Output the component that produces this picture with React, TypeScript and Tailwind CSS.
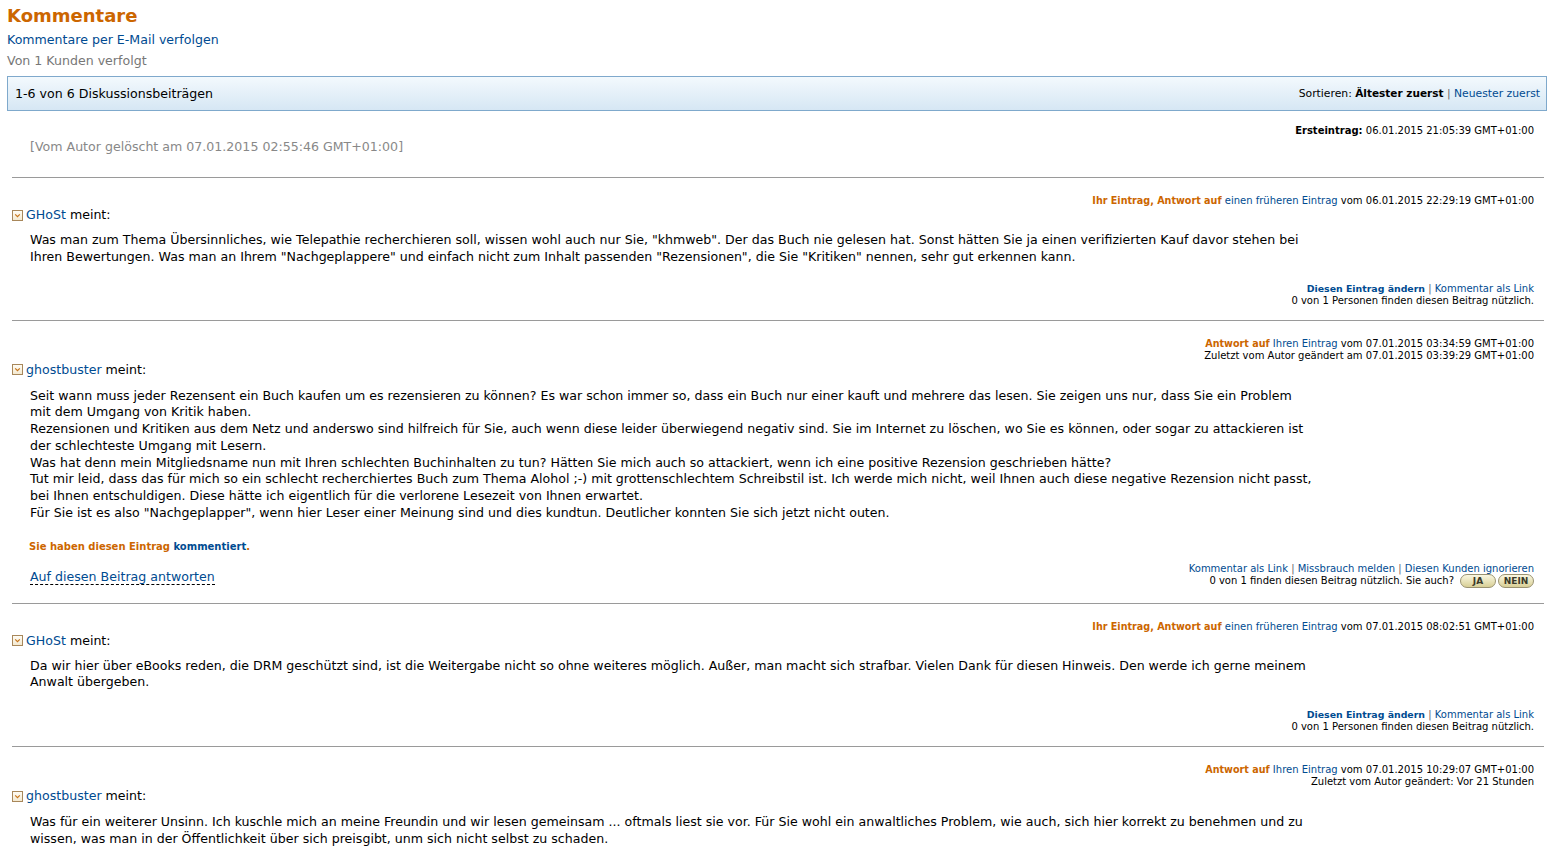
import React from "react";

const ORANGE = "text-[#CC6600]";
const LINK = "text-[#004B91]";

function ToggleIcon() {
  return (
    <svg width="11" height="11" viewBox="0 0 11 11" className="shrink-0">
      <defs>
        <linearGradient id="tg" x1="0" y1="0" x2="0" y2="1">
          <stop offset="0" stopColor="#fffdf6" />
          <stop offset="1" stopColor="#f3e8cf" />
        </linearGradient>
      </defs>
      <rect x="0.5" y="0.5" width="10" height="10" fill="url(#tg)" stroke="#a8875a" />
      <path d="M3.2 4.3 L5.5 6.6 L7.8 4.3" fill="none" stroke="#c8741a" strokeWidth="1.2" />
    </svg>
  );
}

function Pill({ label, w }: { label: string; w: string }) {
  return (
    <span
      className={`inline-flex ${w} h-[14px] items-center justify-center rounded-full border border-[#9a9270] bg-gradient-to-b from-[#fbf8e2] to-[#d8cf95] text-[9px] font-bold leading-none text-[#3a3a2a]`}
    >
      {label}
    </span>
  );
}

function Hr() {
  return <div className="h-px bg-[#9a9a9a]" />;
}

function Name({ name }: { name: string }) {
  return (
    <div className="flex h-[16px] items-center gap-[3px] text-[12.6px] leading-[16px]">
      <ToggleIcon />
      <span>
        <span className={LINK}>{name}</span> meint:
      </span>
    </div>
  );
}

function Body({ lines }: { lines: string[] }) {
  return (
    <div className="pl-[18px] text-[12.6px] leading-[16.75px] text-black">
      {lines.map((l, i) => (
        <div key={i} className="whitespace-nowrap">
          {l}
        </div>
      ))}
    </div>
  );
}

function Meta({ children }: { children: React.ReactNode }) {
  return <div className="pr-[10px] text-right text-[10px] leading-[12px] text-black">{children}</div>;
}

function OwnActions() {
  return (
    <div className="pr-[10px] text-right text-[10px] leading-[12px] text-black">
      <div>
        <span className={`text-[9.4px] font-bold ${LINK}`}>Diesen Eintrag ändern</span>
        <span className="text-[#666]"> | </span>
        <span className={LINK}>Kommentar als Link</span>
      </div>
      <div>0 von 1 Personen finden diesen Beitrag nützlich.</div>
    </div>
  );
}

export default function App() {
  return (
    <div
      className="min-h-[865px] bg-white px-[7px] text-black"
      style={{ fontFamily: '"DejaVu Sans", Verdana, sans-serif' }}
    >
      <div className={`pt-[4px] text-[18px] font-bold leading-[24px] ${ORANGE}`}>Kommentare</div>
      <div className={`mt-[3px] text-[12.6px] leading-[18px] ${LINK}`}>Kommentare per E-Mail verfolgen</div>
      <div className="mt-[3px] text-[12.6px] leading-[18px] text-[#777]">Von 1 Kunden verfolgt</div>

      <div className="mt-[6px] -mr-[7px] flex h-[35px] items-center justify-between border border-[#7fa9cc] bg-gradient-to-b from-[#f3f9fd] to-[#d6e7f4] pl-[7px] pr-[6px] pt-[2px]">
        <span className="text-[12.6px]">1-6 von 6 Diskussionsbeiträgen</span>
        <span className="text-[10.8px]">
          Sortieren: <span className="text-[10.5px] font-bold">Ältester zuerst</span>
          <span className="text-[#666]"> | </span>
          <span className={LINK}>Neuester zuerst</span>
        </span>
      </div>

      <div className="ml-[5px] mr-[-4px]">
        {/* entry 1 */}
        <div className="pt-[14px]">
          <Meta>
            <span className="font-bold">Ersteintrag:</span> 06.01.2015 21:05:39 GMT+01:00
          </Meta>
          <div className="mt-[1px] pl-[18px] text-[12.6px] leading-[17px] text-[#888]">
            [Vom Autor gelöscht am 07.01.2015 02:55:46 GMT+01:00]
          </div>
          <div className="h-[22px]" />
        </div>
        <Hr />

        {/* entry 2 */}
        <div className="pt-[17px]">
          <Meta>
            <span className={`text-[9.6px] font-bold ${ORANGE}`}>Ihr Eintrag, Antwort auf</span>{" "}
            <span className={LINK}>einen früheren Eintrag</span> vom 06.01.2015 22:29:19 GMT+01:00
          </Meta>
          <Name name="GHoSt" />
          <div className="mt-[9px]">
            <Body
              lines={[
                'Was man zum Thema Übersinnliches, wie Telepathie recherchieren soll, wissen wohl auch nur Sie, "khmweb". Der das Buch nie gelesen hat. Sonst hätten Sie ja einen verifizierten Kauf davor stehen bei',
                'Ihren Bewertungen. Was man an Ihrem "Nachgeplappere" und einfach nicht zum Inhalt passenden "Rezensionen", die Sie "Kritiken" nennen, sehr gut erkennen kann.',
              ]}
            />
          </div>
          <div className="mt-[17px]">
            <OwnActions />
          </div>
          <div className="h-[13px]" />
        </div>
        <Hr />

        {/* entry 3 */}
        <div className="pt-[17px]">
          <Meta>
            <div>
              <span className={`text-[9.6px] font-bold ${ORANGE}`}>Antwort auf</span>{" "}
              <span className={LINK}>Ihren Eintrag</span> vom 07.01.2015 03:34:59 GMT+01:00
            </div>
            <div>Zuletzt vom Autor geändert am 07.01.2015 03:39:29 GMT+01:00</div>
          </Meta>
          <Name name="ghostbuster" />
          <div className="mt-[10px]">
            <Body
              lines={[
                "Seit wann muss jeder Rezensent ein Buch kaufen um es rezensieren zu können? Es war schon immer so, dass ein Buch nur einer kauft und mehrere das lesen. Sie zeigen uns nur, dass Sie ein Problem",
                "mit dem Umgang von Kritik haben.",
                "Rezensionen und Kritiken aus dem Netz und anderswo sind hilfreich für Sie, auch wenn diese leider überwiegend negativ sind. Sie im Internet zu löschen, wo Sie es können, oder sogar zu attackieren ist",
                "der schlechteste Umgang mit Lesern.",
                "Was hat denn mein Mitgliedsname nun mit Ihren schlechten Buchinhalten zu tun? Hätten Sie mich auch so attackiert, wenn ich eine positive Rezension geschrieben hätte?",
                "Tut mir leid, dass das für mich so ein schlecht recherchiertes Buch zum Thema Alohol ;-) mit grottenschlechtem Schreibstil ist. Ich werde mich nicht, weil Ihnen auch diese negative Rezension nicht passt,",
                "bei Ihnen entschuldigen. Diese hätte ich eigentlich für die verlorene Lesezeit von Ihnen erwartet.",
                'Für Sie ist es also "Nachgeplapper", wenn hier Leser einer Meinung sind und dies kundtun. Deutlicher konnten Sie sich jetzt nicht outen.',
              ]}
            />
          </div>
          <div className={`mt-[19px] pl-[17px] text-[10px] font-bold leading-[12px] ${ORANGE}`}>
            Sie haben diesen Eintrag <span className={LINK}>kommentiert</span>.
          </div>
          <div className="mt-[10px] flex items-start justify-between">
            <div className="pl-[18px] pt-[6px] text-[12.6px] leading-[16px]">
              <span className={`border-b border-dashed border-black ${LINK}`}>
                Auf diesen Beitrag antworten
              </span>
            </div>
            <div className="pr-[10px] text-right text-[10px] leading-[12px]">
              <div>
                <span className={LINK}>Kommentar als Link</span>
                <span className="text-[#666]"> | </span>
                <span className={LINK}>Missbrauch melden</span>
                <span className="text-[#666]"> | </span>
                <span className={LINK}>Diesen Kunden ignorieren</span>
              </div>
              <div className="flex h-[13px] items-center justify-end gap-[2px]">
                <span className="mr-[4px]">0 von 1 finden diesen Beitrag nützlich. Sie auch?</span>
                <Pill label="JA" w="w-[36px]" />
                <Pill label="NEIN" w="w-[36px]" />
              </div>
            </div>
          </div>
          <div className="h-[15px]" />
        </div>
        <Hr />

        {/* entry 4 */}
        <div className="pt-[17px]">
          <Meta>
            <span className={`text-[9.6px] font-bold ${ORANGE}`}>Ihr Eintrag, Antwort auf</span>{" "}
            <span className={LINK}>einen früheren Eintrag</span> vom 07.01.2015 08:02:51 GMT+01:00
          </Meta>
          <Name name="GHoSt" />
          <div className="mt-[9px]">
            <Body
              lines={[
                "Da wir hier über eBooks reden, die DRM geschützt sind, ist die Weitergabe nicht so ohne weiteres möglich. Außer, man macht sich strafbar. Vielen Dank für diesen Hinweis. Den werde ich gerne meinem",
                "Anwalt übergeben.",
              ]}
            />
          </div>
          <div className="mt-[18px]">
            <OwnActions />
          </div>
          <div className="h-[13px]" />
        </div>
        <Hr />

        {/* entry 5 */}
        <div className="pt-[17px]">
          <Meta>
            <div>
              <span className={`text-[9.6px] font-bold ${ORANGE}`}>Antwort auf</span>{" "}
              <span className={LINK}>Ihren Eintrag</span> vom 07.01.2015 10:29:07 GMT+01:00
            </div>
            <div>Zuletzt vom Autor geändert: Vor 21 Stunden</div>
          </Meta>
          <Name name="ghostbuster" />
          <div className="mt-[10px]">
            <Body
              lines={[
                "Was für ein weiterer Unsinn. Ich kuschle mich an meine Freundin und wir lesen gemeinsam ... oftmals liest sie vor. Für Sie wohl ein anwaltliches Problem, wie auch, sich hier korrekt zu benehmen und zu",
                "wissen, was man in der Öffentlichkeit über sich preisgibt, unm sich nicht selbst zu schaden.",
              ]}
            />
          </div>
        </div>
      </div>
    </div>
  );
}
